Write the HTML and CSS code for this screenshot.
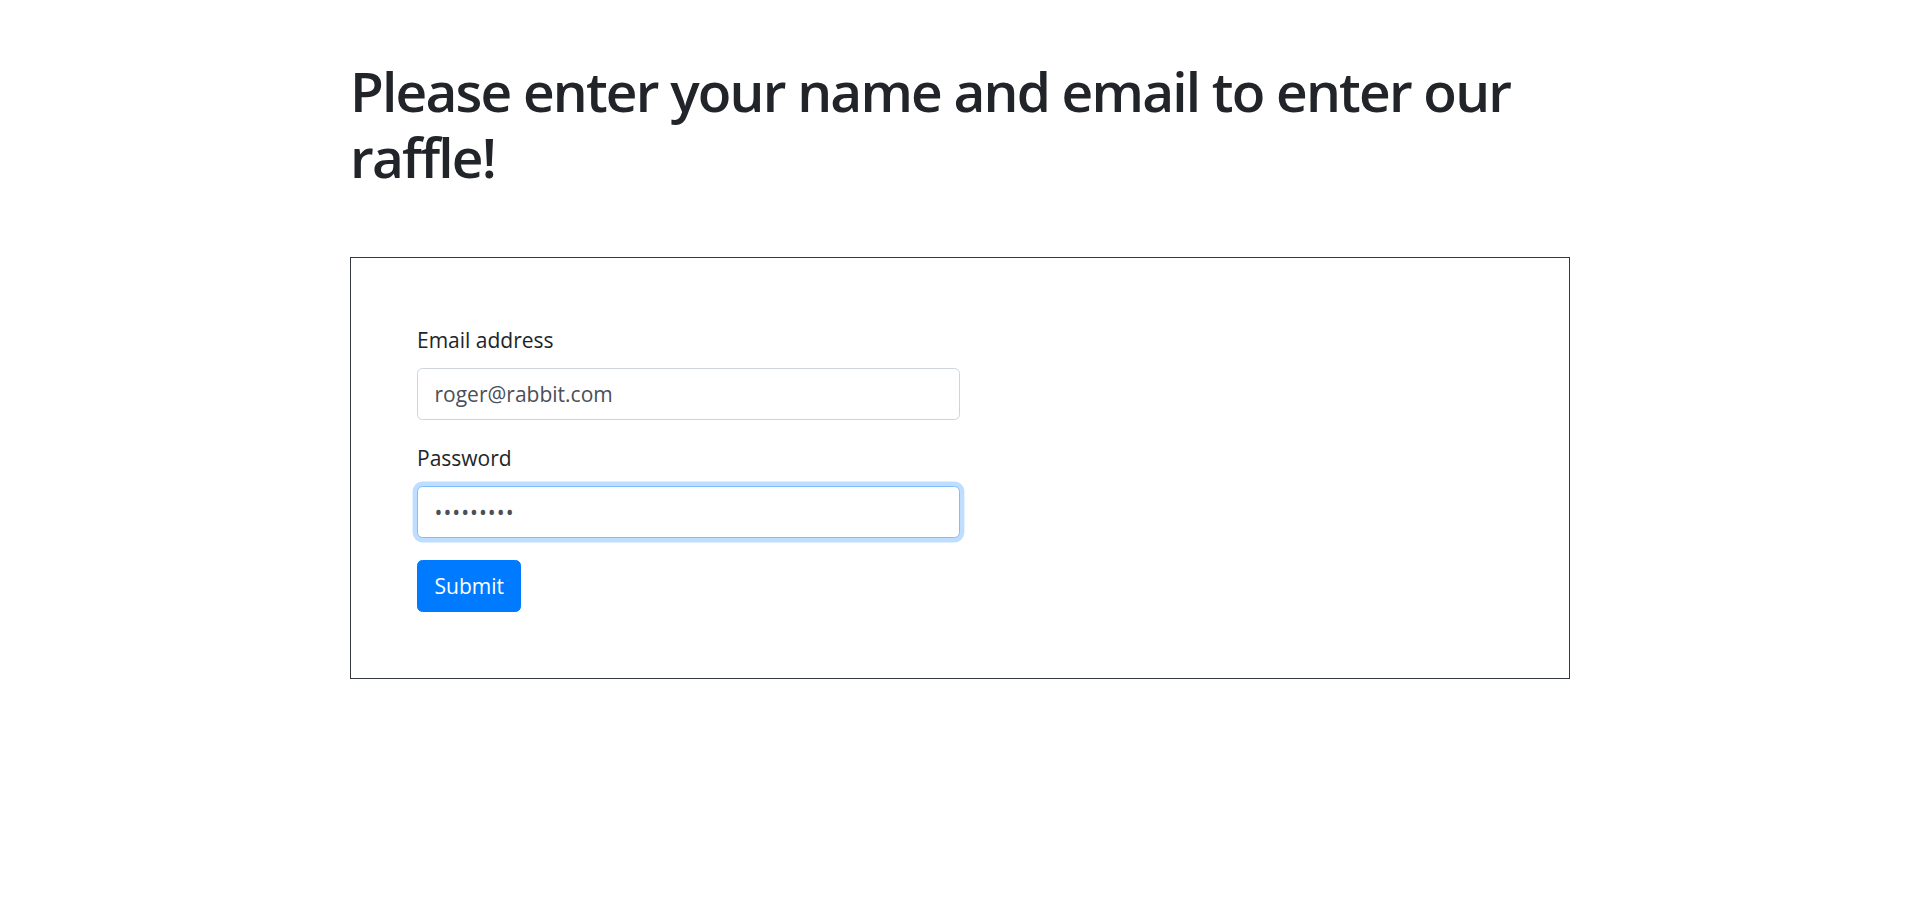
FILE: index.html
```html
<!DOCTYPE html>
<html lang="en">
<head>
<meta charset="utf-8">
<title>Raffle</title>
<link rel="stylesheet" href="styles.css">
</head>
<body>
<main class="container">
  <h1 class="title">Please enter your name and email to enter our raffle!</h1>
  <form class="panel">
    <div class="form-group">
      <label class="label" for="email">Email address</label>
      <input class="input" id="email" type="email" value="roger@rabbit.com">
    </div>
    <div class="form-group">
      <label class="label" for="pw">Password</label>
      <input class="input input-focus input-password" id="pw" type="password" value="123456789">
    </div>
    <button class="btn" type="button">Submit</button>
  </form>
</main>
</body>
</html>
```
FILE: styles.css
```css
html, body {
  margin: 0;
  padding: 0;
  background: #fff;
}
body {
  font-family: "Open Sans", "Noto Sans", "Liberation Sans", sans-serif;
  font-size: 22px;
  line-height: 33px;
  color: #212529;
}
.container {
  width: 1220px;
  margin: 0 auto;
  padding-top: 58px;
}
.title {
  margin: 0;
  font-size: 55px;
  line-height: 66px;
  font-weight: 600;
  letter-spacing: -1.8px;
  color: #212529;
}
.panel {
  margin-top: 67px;
  border: 1px solid #343a40;
  padding: 66px;
}
.form-group {
  margin-bottom: 22px;
}
.label {
  display: block;
  margin-bottom: 11px;
  font-size: 21px;
  line-height: 33px;
}
.input {
  box-sizing: border-box;
  display: block;
  width: 50%;
  height: 52px;
  padding: 5px 16.5px;
  font-family: inherit;
  font-size: 21px;
  line-height: 33px;
  color: #495057;
  background: #fff;
  border: 1px solid #ced4da;
  border-radius: 5.5px;
  outline: none;
}
.input-focus {
  border-color: #80bdff;
  box-shadow: 0 0 0 4.4px rgba(0, 123, 255, 0.25);
}
.input-password {
  letter-spacing: 1px;
}
.btn {
  display: inline-block;
  height: 52px;
  padding: 5px 16.5px;
  font-family: inherit;
  font-size: 21px;
  line-height: 33px;
  color: #fff;
  background: #007bff;
  border: 1px solid #007bff;
  border-radius: 5.5px;
  cursor: pointer;
}
```
